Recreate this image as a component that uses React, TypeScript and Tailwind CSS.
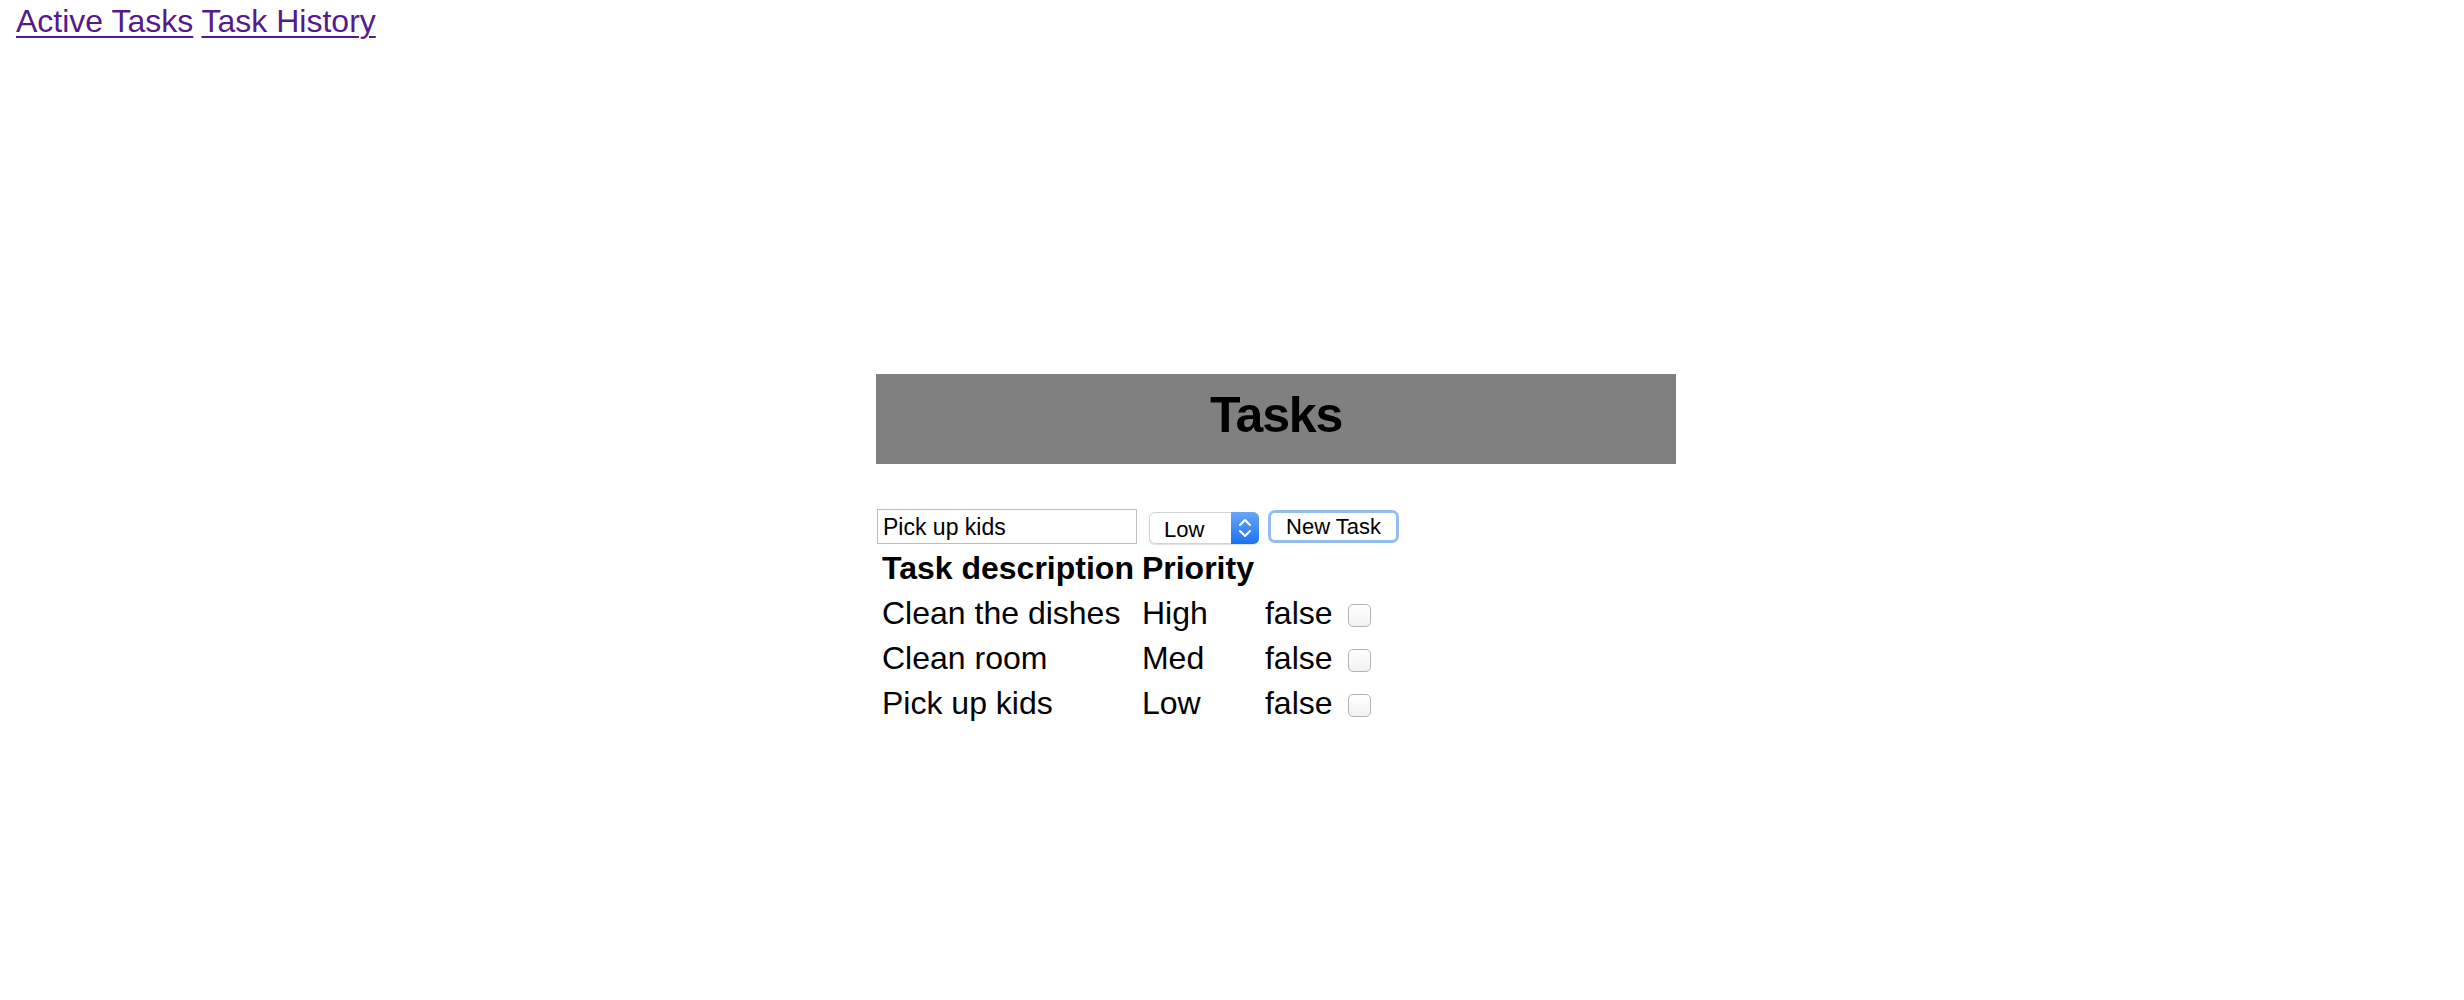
import { useState } from 'react'

type Task = { description: string; priority: string; done: boolean }

const initialTasks: Task[] = [
  { description: 'Clean the dishes', priority: 'High', done: false },
  { description: 'Clean room', priority: 'Med', done: false },
  { description: 'Pick up kids', priority: 'Low', done: false },
]

function Chevrons() {
  return (
    <svg width="14" height="22" viewBox="0 0 14 22" fill="none" stroke="white" strokeWidth="2" strokeLinecap="round" strokeLinejoin="round">
      <path d="M2 8 L7 3 L12 8" />
      <path d="M2 14 L7 19 L12 14" />
    </svg>
  )
}

export default function App() {
  const [tasks, setTasks] = useState<Task[]>(initialTasks)
  const [text, setText] = useState('Pick up kids')
  const [priority, setPriority] = useState('Low')

  return (
    <div className="min-h-screen bg-white font-['Liberation_Sans',Arial,sans-serif] text-black">
      <nav className="pl-4 pt-[3px] text-[32px] leading-[37px]">
        <a href="#active" className="text-[#551a8b] underline decoration-2 underline-offset-[4px]">
          Active Tasks
        </a>{' '}
        <a href="#history" className="text-[#551a8b] underline decoration-2 underline-offset-[4px]">
          Task History
        </a>
      </nav>

      <main className="ml-[876px] mt-[334px] w-[800px]">
        <div className="h-[90px] bg-[#808080] pt-[12px] text-center">
          <h1 className="text-[50px] font-bold leading-[58px] tracking-[-1.2px]">Tasks</h1>
        </div>

        <form
          className="mt-[45px] flex items-end"
          onSubmit={(event) => {
            event.preventDefault()
            if (!text.trim()) return
            setTasks((current) => [...current, { description: text, priority, done: false }])
          }}
        >
          <input
            value={text}
            onChange={(event) => setText(event.target.value)}
            className="ml-[1px] h-[35px] w-[260px] border border-[#bdbdbd] px-[5px] pt-[2px] text-[23px] outline-none"
          />
          <div className="relative ml-[12px] h-[32px] w-[110px]">
            <select
              value={priority}
              onChange={(event) => setPriority(event.target.value)}
              className="h-full w-full appearance-none rounded-[6px] border border-[#d2d2d2] bg-white pl-[14px] text-[22px] shadow-[0_1px_1px_rgba(0,0,0,0.12)] outline-none"
            >
              <option>Low</option>
              <option>Med</option>
              <option>High</option>
            </select>
            <span className="pointer-events-none absolute bottom-0 right-0 top-0 flex w-[28px] items-center justify-center rounded-r-[6px] bg-gradient-to-b from-[#67a6f8] to-[#1871f1]">
              <Chevrons />
            </span>
          </div>
          <button
            type="submit"
            className="mb-[1px] ml-[9px] h-[33px] w-[131px] rounded-[7px] border-[3px] border-[#93bcf1] bg-white pt-[1px] text-[22px] leading-none"
          >
            New Task
          </button>
        </form>

        <table className="border-separate border-spacing-[4px] text-[32px] leading-[37px]">
          <thead>
            <tr>
              <th className="px-[2px] py-[2px] text-left font-bold">Task description</th>
              <th className="py-[2px] pl-[2px] pr-[5px] text-left font-bold">Priority</th>
            </tr>
          </thead>
          <tbody>
            {tasks.map((task, index) => (
              <tr key={index}>
                <td className="px-[2px] py-[2px]">{task.description}</td>
                <td className="px-[2px] py-[2px]">{task.priority}</td>
                <td className="px-[2px] py-[2px]">
                  {String(task.done)}
                  <input
                    type="checkbox"
                    checked={task.done}
                    onChange={() =>
                      setTasks((current) =>
                        current.map((item, i) => (i === index ? { ...item, done: !item.done } : item)),
                      )
                    }
                    className="ml-[15px] inline-block h-[23px] w-[23px] appearance-none rounded-[5px] border border-[#b3b3b3] bg-gradient-to-b from-white to-[#f2f2f2] align-middle checked:bg-[#1a73f0]"
                  />
                </td>
              </tr>
            ))}
          </tbody>
        </table>
      </main>
    </div>
  )
}
